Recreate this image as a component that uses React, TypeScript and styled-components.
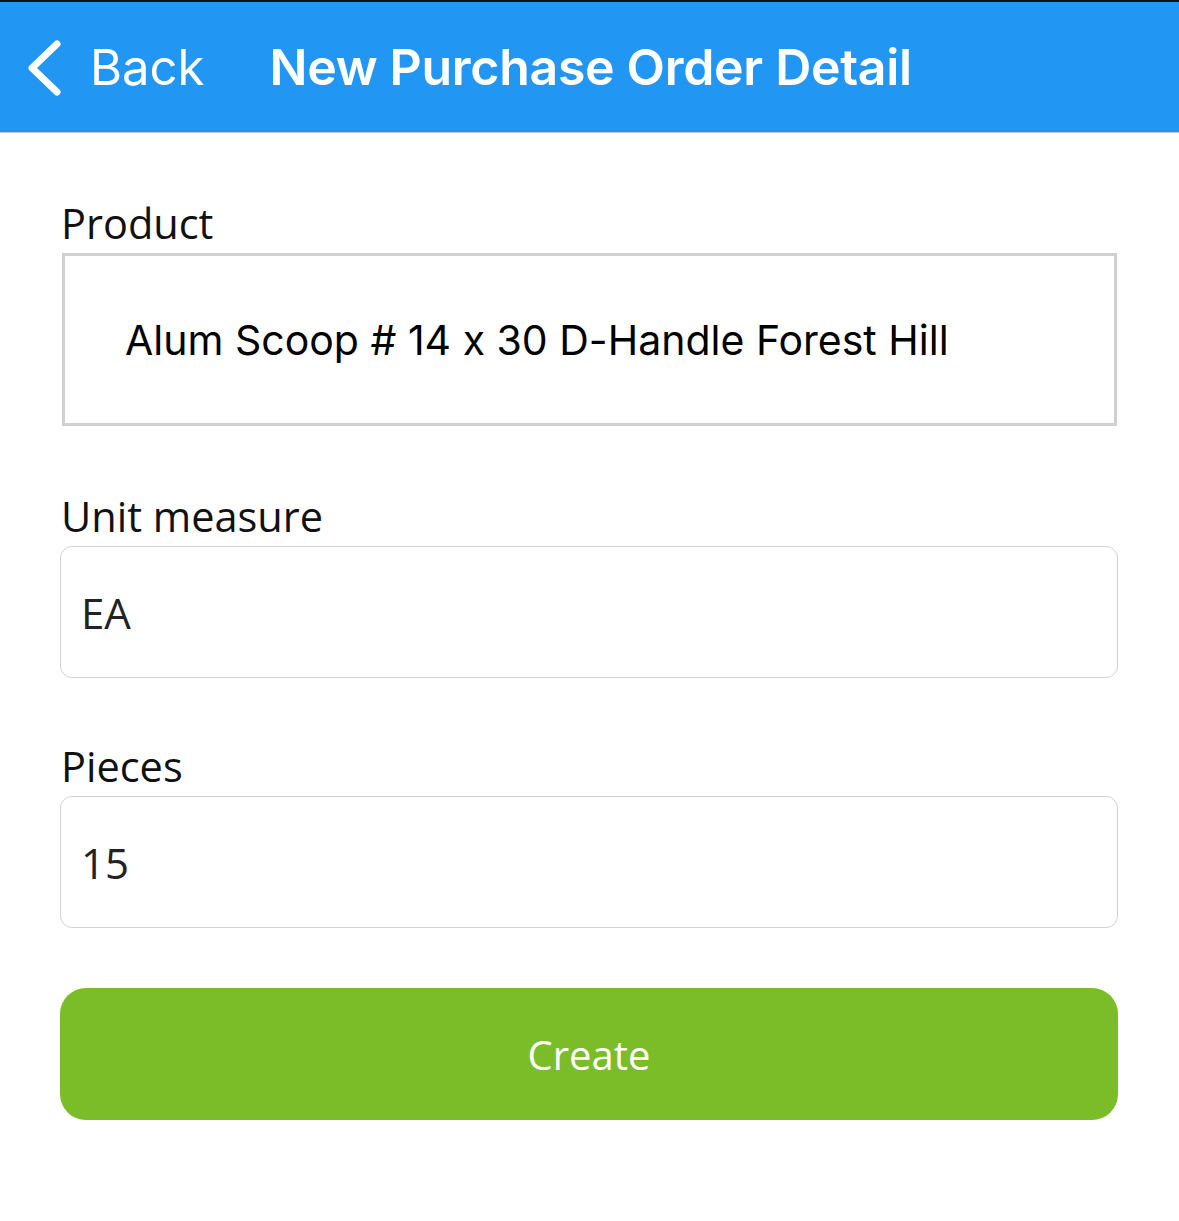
import React from 'react';
import styled, { createGlobalStyle } from 'styled-components';

const GlobalStyle = createGlobalStyle`
  html, body {
    margin: 0;
    padding: 0;
    background: #ffffff;
  }
  body {
    font-family: "Open Sans", "Noto Sans", sans-serif;
    color: #111111;
  }
`;

const Screen = styled.div`
  width: 1179px;
  min-height: 1221px;
  background: #ffffff;
`;

const NavBar = styled.header`
  height: 130px;
  display: flex;
  align-items: center;
  background: #2196f3;
  border-top: 2px solid #111111;
  border-bottom: 1px solid #c4c4c4;
  padding-left: 24px;
  color: #ffffff;
  font-family: Inter, "Noto Sans", sans-serif;
`;

const BackButton = styled.button`
  display: flex;
  align-items: center;
  gap: 26px;
  background: none;
  border: 0;
  padding: 0;
  color: #ffffff;
  font-family: inherit;
  font-size: 49px;
  font-weight: 400;
  cursor: pointer;
`;

const Title = styled.h1`
  margin: 0 0 0 65px;
  font-size: 50px;
  font-weight: 600;
  letter-spacing: -0.3px;
`;

const Form = styled.form`
  display: flex;
  flex-direction: column;
  padding: 64px 61px 0 60px;
`;

const Field = styled.div<{ $after: number }>`
  display: flex;
  flex-direction: column;
  gap: 4px;
  margin-bottom: ${(p) => p.$after}px;
`;

const Label = styled.label`
  font-size: 41.5px;
  line-height: 52px;
  color: #111111;
  padding-left: 1px;
`;

const ProductBox = styled.div`
  height: 167px;
  margin: 0 1px 0 2px;
  display: flex;
  align-items: center;
  border: 3px solid #d0d0d0;
  padding-left: 60px;
  font-family: Inter, "Liberation Sans", sans-serif;
  font-feature-settings: "calt" 0;
  font-size: 41px;
  color: #000000;
`;

const TextInput = styled.input`
  box-sizing: border-box;
  height: 132px;
  width: 100%;
  border: 1px solid #d2d2d2;
  border-radius: 12px;
  padding: 0 20px;
  font-family: "Open Sans", sans-serif;
  font-size: 42px;
  color: #222222;
  background: #ffffff;
  outline: none;
`;

const SubmitButton = styled.button`
  height: 132px;
  width: 100%;
  border: 0;
  border-radius: 26px;
  background: #7bbd28;
  color: #ffffff;
  font-family: "Open Sans", sans-serif;
  font-size: 40px;
  cursor: pointer;
`;

const Chevron = () => (
  <svg width="40" height="60" viewBox="0 0 40 60" fill="none">
    <polyline
      points="33,7 8,31 33,55"
      stroke="#ffffff"
      strokeWidth="7"
      strokeLinecap="round"
      strokeLinejoin="round"
    />
  </svg>
);

const App: React.FC = () => {
  return (
    <Screen>
      <GlobalStyle />
      <NavBar>
        <BackButton type="button">
          <Chevron />
          Back
        </BackButton>
        <Title>New Purchase Order Detail</Title>
      </NavBar>

      <Form onSubmit={(e) => e.preventDefault()}>
        <Field $after={64}>
          <Label>Product</Label>
          <ProductBox>Alum Scoop # 14 x 30 D-Handle Forest Hill</ProductBox>
        </Field>
        <Field $after={62}>
          <Label>Unit measure</Label>
          <TextInput defaultValue="EA" />
        </Field>
        <Field $after={60}>
          <Label>Pieces</Label>
          <TextInput defaultValue="15" />
        </Field>
        <SubmitButton type="submit">Create</SubmitButton>
      </Form>
    </Screen>
  );
};

export default App;
